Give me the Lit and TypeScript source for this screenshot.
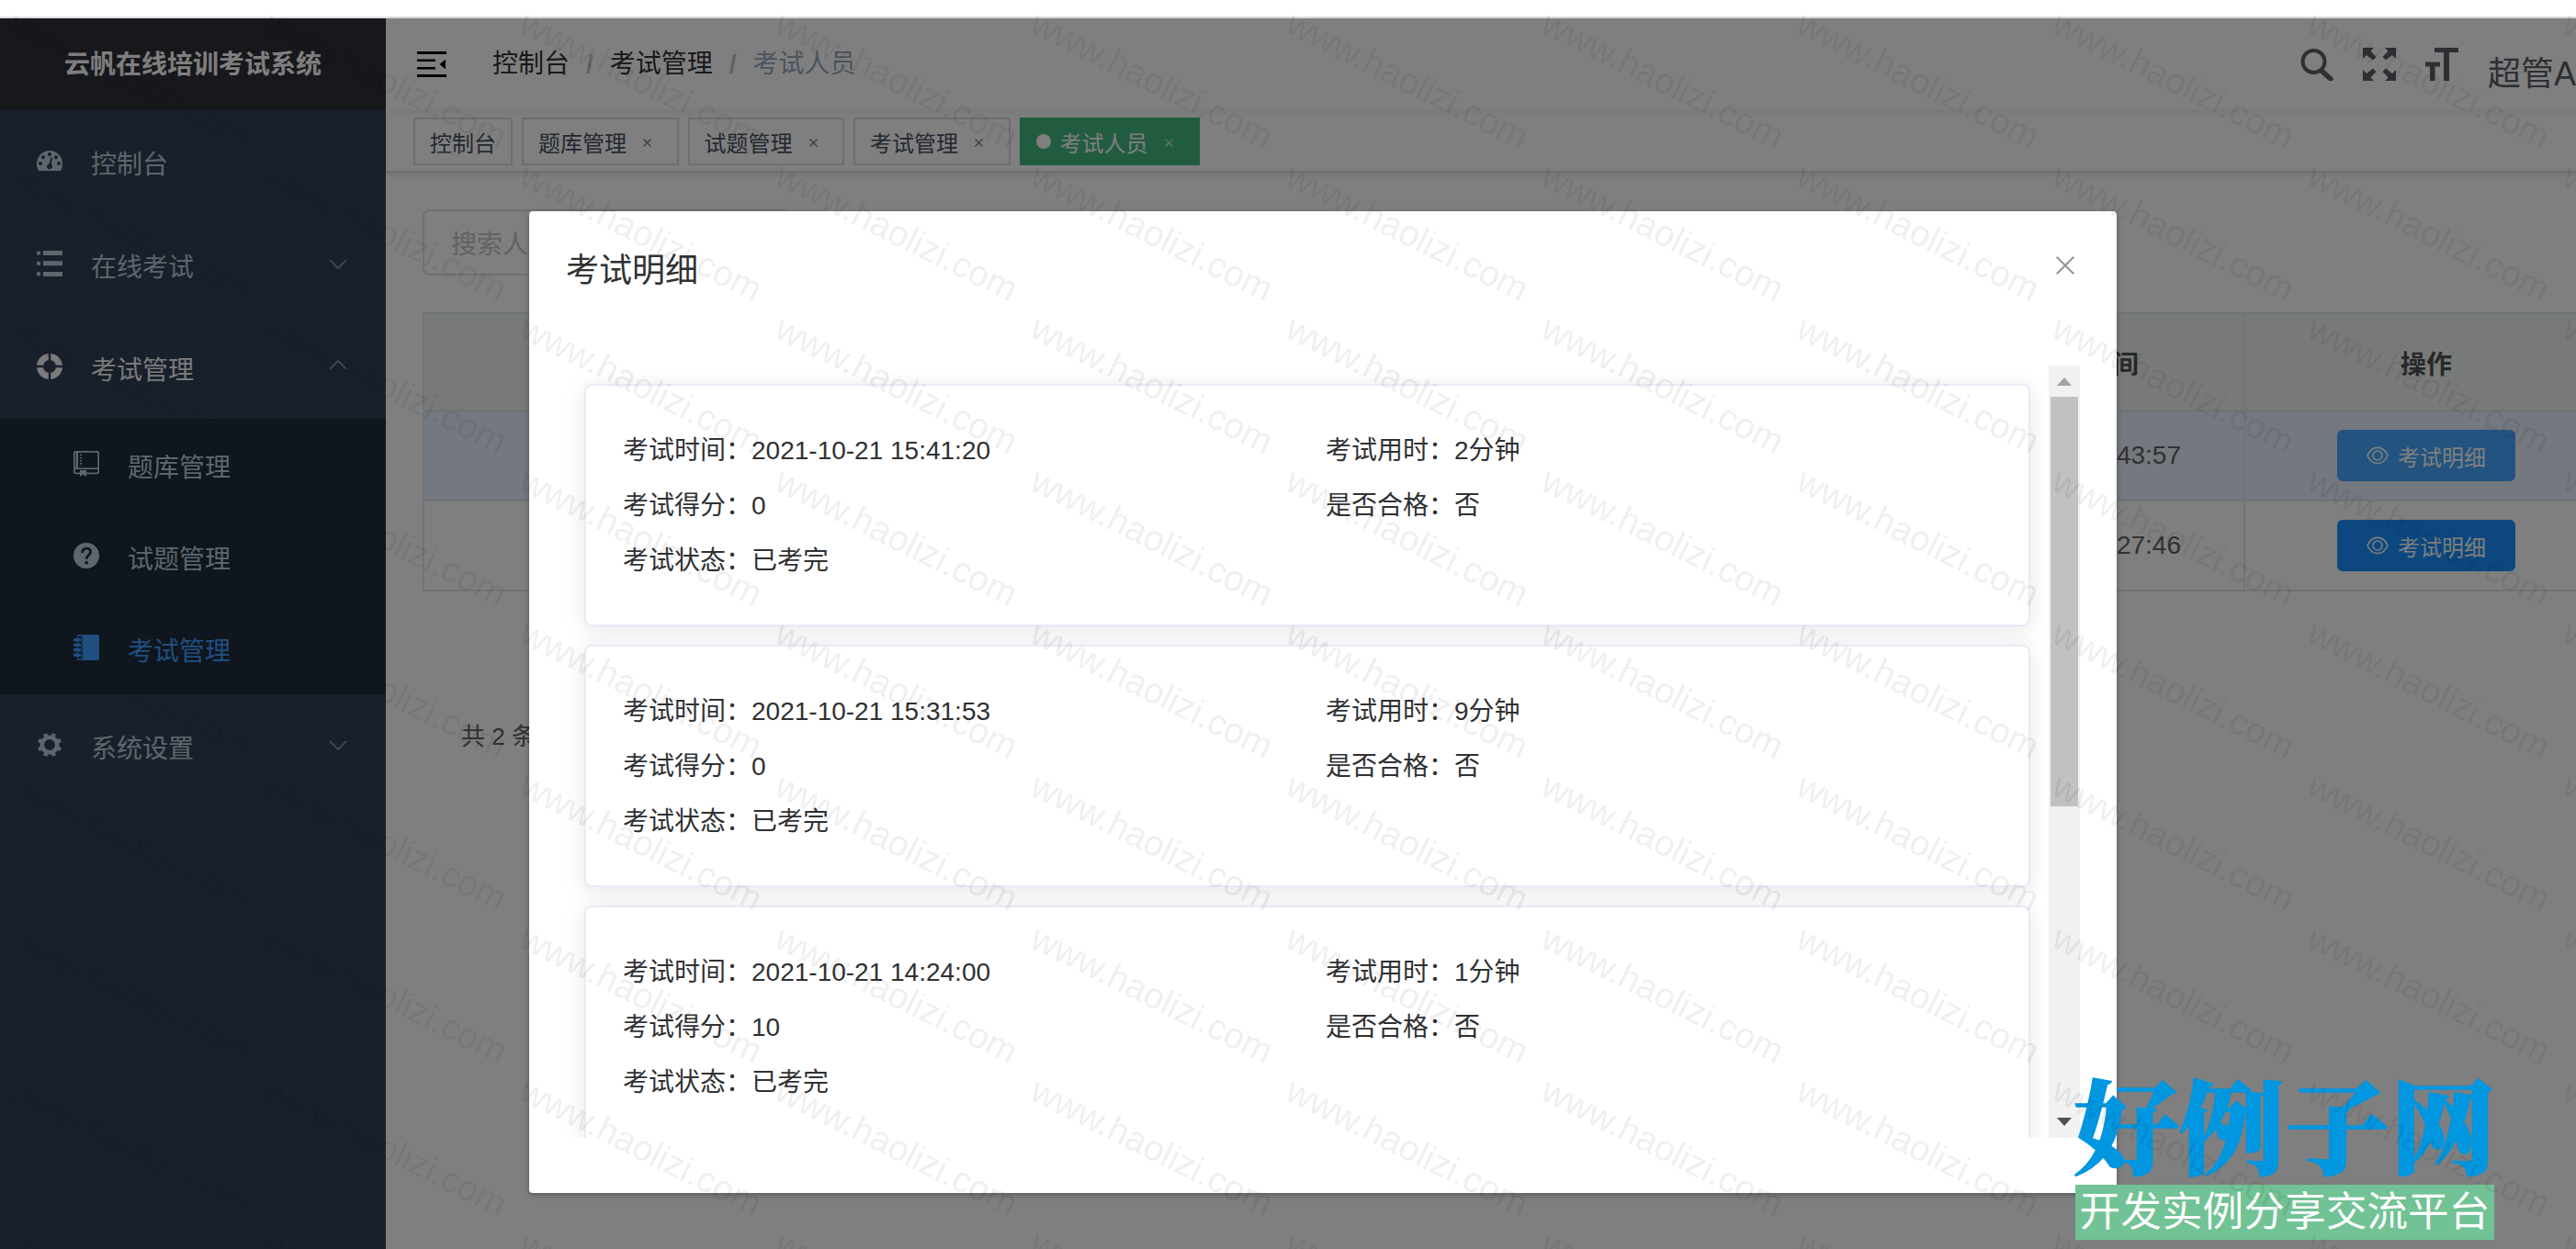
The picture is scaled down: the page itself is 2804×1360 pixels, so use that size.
import { LitElement, html, css, svg } from "lit";
import { customElement } from "lit/decorators.js";

interface Exam { time: string; used: string; score: string; pass: string; state: string; }

const EXAMS: Exam[] = [
  { time: "2021-10-21 15:41:20", used: "2分钟", score: "0", pass: "否", state: "已考完" },
  { time: "2021-10-21 15:31:53", used: "9分钟", score: "0", pass: "否", state: "已考完" },
  { time: "2021-10-21 14:24:00", used: "1分钟", score: "10", pass: "否", state: "已考完" },
];

const ROWS = [
  { time: "2021-10-21 15:43:57", current: true },
  { time: "2021-10-21 14:27:46", current: false },
];

const TAGS = ["控制台", "题库管理", "试题管理", "考试管理", "考试人员"];

const icon = {
  dashboard: svg`<path transform="translate(0 3)" fill-rule="evenodd" d="M2.200 22C.6 20 0 17 0 14.500a14 14.500 0 0 1 28 0c0 2.500-.6 5.500-2.200 7.500zM4 12a2 2 0 1 0 .01 0zM7 5.200a2 2 0 1 0 .01 0zM14 2a2 2 0 1 0 .01 0zM21 5.200a2 2 0 1 0 .01 0zM24 12a2 2 0 1 0 .01 0zM15.400 7.500l-2 7a3 3 0 1 0 2.400.6L17 8z"/>`,
  list: svg`<circle cx="2" cy="2.600" r="2.200"/><rect x="7" y="0" width="21" height="5"/><circle cx="2" cy="13.800" r="2.200"/><rect x="7" y="11.200" width="21" height="5"/><circle cx="2" cy="25.300" r="2.200"/><rect x="7" y="23" width="21" height="5"/>`,
  ring: svg`<circle cx="14" cy="14" r="10.500" fill="none" stroke="currentColor" stroke-width="7"/><path d="M14 0V7.500M14 20.500V28M0 14H7.500M20.500 14H28" stroke="#304156" stroke-width="2.400" fill="none"/>`,
  book: svg`<rect x=".8" y=".8" width="26.400" height="23.500" rx="1.500" fill="none" stroke="currentColor" stroke-width="1.700"/><path d="M3.800 1V19" stroke="currentColor" stroke-width="2.400" fill="none"/><path d="M1 19.200H27" stroke="currentColor" stroke-width="1.600" fill="none"/><path d="M8 3.500V16.500" stroke="currentColor" stroke-width="1.800" stroke-dasharray="1.600 1.600"/><path d="M7 21h7v7l-3.500-2.500L7 28z"/>`,
  question: svg`<circle cx="14" cy="14" r="14"/><path d="M9.700 11c0-6.500 9-6 9-1.200 0 3.400-4.500 3.700-4.500 8" fill="none" stroke="#1f2d3d" stroke-width="2.800"/><circle cx="14.100" cy="21.700" r="1.900" fill="#1f2d3d"/>`,
  notebook: svg`<path d="M4 0H26a2 2 0 0 1 2 2V26a2 2 0 0 1-2 2H4z"/><path d="M6.800 1.500V26.500" stroke="#1f2d3d" stroke-width="3.600"/><path d="M9.600 1V27" stroke="#1f2d3d" stroke-width=".6"/><rect x="0" y="4" width="8" height="3.600" rx="1"/><rect x="0" y="9.500" width="8" height="3.600" rx="1"/><rect x="0" y="15" width="8" height="3.600" rx="1"/><rect x="0" y="20.500" width="8" height="3.600" rx="1"/>`,
  gear: svg`<circle cx="14" cy="14" r="8.200" fill="none" stroke="currentColor" stroke-width="4.600"/><path d="M14 1v4M14 23v4M1 14h4M23 14h4M4.800 4.800l3 3M20.200 20.200l3 3M4.800 23.200l3-3M20.200 7.800l3-3" stroke="currentColor" stroke-width="4.400" transform="rotate(22.500 14 14)"/>`,
};

const menuIcon = (name: keyof typeof icon) =>
  html`<svg class="micon" viewBox="0 0 28 28" fill="currentColor">${icon[name]}</svg>`;

const chevron = (up = false) =>
  html`<svg class="chev" viewBox="0 0 24 24" fill="none" stroke="currentColor" stroke-width="1.600">
    <path d=${up ? "M3 15l9-9 9 9" : "M3 8l9 9 9-9"} /></svg>`;

@customElement("app-root")
export class AppRoot extends LitElement {
  static styles = css`
    :host { display: block; position: relative; width: 2804px; height: 1360px; overflow: hidden; background: #fff;
      font-family: "Liberation Sans", "Noto Sans CJK SC", sans-serif; font-size: 28px; color: #303133; }
    * { box-sizing: border-box; }
    svg { display: block; flex: none; }
    .strip { height: 20px; border-bottom: 2px solid #dcdfdf; background: #fff; }
    .page { display: flex; height: 1340px; }
    .side { width: 420px; flex: none; background: #304156; color: #bfcbd9; }
    .brand { height: 100px; line-height: 102px; background: #2f3137; color: #fff; font-weight: 700; text-align: center; }
    .item { height: 112px; padding: 0 40px; display: flex; align-items: center; }
    .item.open { color: #f4f4f5; }
    .micon { width: 28px; height: 28px; margin: -2px 31px 0 0; }
    .item .label { flex: 1; padding-top: 2px; }
    .chev { width: 24px; height: 24px; color: #909aa6; margin-top: -2px; }
    .sub { background: #1f2d3d; }
    .sub .item { height: 100px; padding-left: 80px; }
    .sub .on { color: #409eff; }
    .main { flex: none; width: 2480px; }
    .nav { position: relative; height: 100px; display: flex; align-items: center; padding-left: 34px;
      box-shadow: 0 2px 8px rgba(0, 21, 41, .08); }
    .burger { margin-right: 50px; }
    .crumbs { display: flex; width: 395px; line-height: 102px; color: #303133; white-space: nowrap; }
    .crumbs i { font-style: normal; font-weight: 700; color: #c0c4cc; margin: 0 18px; }
    .crumbs .last { color: #97a8be; }
    .tools { width: 300px; display: flex; align-items: center; gap: 32px; color: #5a5e66; margin-left: 1573px; }
    .user { font-size: 36px; line-height: 100px; padding-top: 22px; white-space: nowrap; }
    .tags { height: 68px; padding: 8px 0 0 30px; display: flex; gap: 10px; border-bottom: 2px solid #d8dce5;
      box-shadow: 0 2px 6px rgba(0, 0, 0, .12); font-size: 24px; color: #495060; }
    .tag { height: 52px; border: 2px solid #d8dce5; padding: 0 16px; display: flex; align-items: center; background: #fff; }
    .tag svg { margin: 3px 11.500px 0 18px; opacity: .8; }
    .tag.active { background: #42b983; border-color: #42b983; color: #fff; }
    .dot { width: 16px; height: 16px; border-radius: 50%; background: #fff; margin-right: 10px; }
    .body { padding: 40px; }
    .search { width: 400px; height: 72px; border: 2px solid #dcdfe6; border-radius: 8px; padding: 0 29px; line-height: 73px; color: #c0c4cc; }
    .table { margin-top: 40px; border: 2px solid #dfe6ec; border-bottom: 0; width: 2382px; }
    .tr { display: grid; grid-template-columns: 1584px 398px 1fr; border-bottom: 2px solid #dfe6ec; height: 98px; background: #fff; }
    .tr.current { background: #e8f1ff; }
    .tr.head { height: 106px; background: #f0f5f2; color: #515151; font-weight: 700; }
    .td { display: flex; align-items: center; justify-content: center; border-right: 2px solid #dfe6ec; color: #606266; }
    .head .td { color: #515151; padding-top: 1px; }
    .btn { display: flex; align-items: center; gap: 10px; height: 56px; width: 194px; justify-content: center; border-radius: 6px;
      background: #1890ff; color: #fff; font-size: 24px; }
    .current .btn { background: #46a6ff; }
    .pager { padding: 138px 0 0 42px; font-size: 26px; line-height: 40px; color: #606266; }
    .mask { position: absolute; inset: 20px 0 0 0; background: rgba(0, 0, 0, .5); }
    .dialog { position: absolute; left: 576px; top: 230px; width: 1728px; height: 1069px; background: #fff; border-radius: 4px;
      box-shadow: 0 2px 6px rgba(0, 0, 0, .3); display: flex; flex-direction: column; padding: 40px 40px 60px; }
    .dhead { display: flex; justify-content: space-between; height: 128px; font-size: 36px; line-height: 49px; }
    .dhead svg { margin: 9px 6px 0 0; }
    .scroll { flex: 1; min-height: 0; display: flex; overflow: hidden; }
    .cards { flex: 1; padding: 20px 20px 0; display: flex; flex-direction: column; gap: 20px; overflow: hidden; }
    .card { flex: none; height: 264px; border: 2px solid #e6ebf5; border-radius: 8px; background: #fff; padding: 40px;
      box-shadow: 0 4px 24px rgba(0, 0, 0, .1); display: grid; grid-template-columns: 765px 1fr; grid-auto-rows: 60px; line-height: 62px; }
    .bar { width: 34px; background: #f1f1f1; display: flex; flex-direction: column; align-items: center; }
    .thumb { width: 30px; height: 446px; background: #c1c1c1; margin-bottom: auto; }
    .overlay { position: absolute; inset: 0; }
    .logo { position: absolute; left: 2257px; top: 1166px; width: 460px; }
    .logo .big { font-family: "Noto Serif CJK SC", "Noto Sans CJK SC", sans-serif; font-weight: 900; font-size: 115px; height: 124px; line-height: 112px;
      color: #0096e0; white-space: nowrap; -webkit-text-stroke: 1.500px #0096e0; transform: scaleY(.97); }
    .logo .small { margin-left: 2px; width: 456px; height: 60px; background: #71c294; color: #fff; font-size: 44.700px; line-height: 60px;
      font-weight: 400; text-align: center; white-space: nowrap; }
  `;

  private field(label: string, value: string) {
    return html`<div>${label}：${value}</div>`;
  }

  render() {
    const marks = [];
    for (let r = 0; r < 9; r++)
      for (let c = 0; c < 11; c++)
        marks.push(svg`<text transform="translate(${7 + c * 278} ${34.5 + r * 166}) rotate(26.500)">www.haolizi.com</text>`);
    return html`
      <div class="strip"></div>
      <div class="page">
        <aside class="side">
          <div class="brand">云帆在线培训考试系统</div>
          <div class="item">${menuIcon("dashboard")}<span class="label">控制台</span></div>
          <div class="item">${menuIcon("list")}<span class="label">在线考试</span>${chevron()}</div>
          <div class="item open">${menuIcon("ring")}<span class="label">考试管理</span>${chevron(true)}</div>
          <div class="sub">
            <div class="item">${menuIcon("book")}<span class="label">题库管理</span></div>
            <div class="item">${menuIcon("question")}<span class="label">试题管理</span></div>
            <div class="item on">${menuIcon("notebook")}<span class="label">考试管理</span></div>
          </div>
          <div class="item">${menuIcon("gear")}<span class="label">系统设置</span>${chevron()}</div>
        </aside>
        <main class="main">
          <div class="nav">
            <svg class="burger" width="32" height="28" viewBox="0 0 32 28"><path d="M0 0h32v3H0zM0 8.500h20v2.500H0zM0 17h20v2.500H0zM0 25h32v3H0zM31 8.500v11L24.500 14z"/></svg>
            <div class="crumbs"><span>控制台</span><i>/</i><span>考试管理</span><i>/</i><span class="last">考试人员</span></div>
            <div class="tools">
              <svg width="36" height="36" viewBox="0 0 36 36" fill="none" stroke="currentColor"><circle cx="14.500" cy="15" r="12" stroke-width="4"/><path d="M23 25l10 9" stroke-width="5.500" stroke-linecap="round"/></svg>
              <svg width="36" height="36" viewBox="0 0 36 36" fill="currentColor"><path d="M0 0h12L8.500 3.500 14.500 10 11 13.500 4 8 0 12zM36 0v12L32 8l-7 5.500L21.500 10l6-6.500L24 0zM0 36V24l4 4 7-5.500 3.500 3.500-6 6.500L12 36zM36 36H24l3.500-3.500-6-6.500 3.500-3.500 7 5.500 4-4z"/></svg>
              <svg width="36" height="36" viewBox="0 0 36 36" fill="currentColor"><path d="M10 0h26v5H26v31h-6V5H10zM0 15.500h16v5h-5.500V36H5V20.500H0z"/></svg>
              <span class="user">超管A</span>
            </div>
          </div>
          <div class="tags">
            ${TAGS.map((t, i) => html`<div class="tag ${i === 4 ? "active" : ""}">
              ${i === 4 ? html`<span class="dot"></span>` : ""}<span>${t}</span>
              ${i ? html`<svg width="9" height="9" viewBox="0 0 9 9" stroke="currentColor" stroke-width="1.100"><path d="M.5.5l8 8M8.500.5l-8 8"/></svg>` : ""}
            </div>`)}
          </div>
          <div class="body">
            <div class="search">搜索人员</div>
            <div class="table">
              <div class="tr head"><div class="td"></div><div class="td">最后考试时间</div><div class="td">操作</div></div>
              ${ROWS.map((r) => html`<div class="tr ${r.current ? "current" : ""}">
                <div class="td"></div><div class="td">${r.time}</div>
                <div class="td"><div class="btn">
                  <svg width="24" height="20" viewBox="0 0 24 20" fill="none" stroke="currentColor" stroke-width="1.600"><path d="M1 10C6-1.500 18-1.500 23 10 18 21.500 6 21.500 1 10z"/><circle cx="12" cy="10" r="5"/></svg>
                  <span>考试明细</span></div></div>
              </div>`)}
            </div>
            <div class="pager">共 2 条</div>
          </div>
        </main>
      </div>
      <div class="mask"></div>
      <section class="dialog">
        <div class="dhead"><span>考试明细</span>
          <svg width="20" height="20" viewBox="0 0 20 20" stroke="#909399" stroke-width="2"><path d="M.7.7l18.600 18.600M19.300.7L.7 19.300"/></svg></div>
        <div class="scroll">
          <div class="cards">
            ${EXAMS.map((e) => html`<div class="card">
              ${this.field("考试时间", e.time)}${this.field("考试用时", e.used)}
              ${this.field("考试得分", e.score)}${this.field("是否合格", e.pass)}
              ${this.field("考试状态", e.state)}</div>`)}
          </div>
          <div class="bar">
            <svg width="34" height="34"><path d="M9 22l8-9 8 9z" fill="#a3a3a3"/></svg>
            <div class="thumb"></div>
            <svg width="34" height="34"><path d="M9 12l8 9 8-9z" fill="#505050"/></svg>
          </div>
        </div>
      </section>
      <div class="logo"><div class="big">好例子网</div><div class="small">开发实例分享交流平台</div></div>
      <svg class="overlay" width="2804" height="1360" font-size="39" fill="#000" fill-opacity=".075">${marks}</svg>
    `;
  }
}
